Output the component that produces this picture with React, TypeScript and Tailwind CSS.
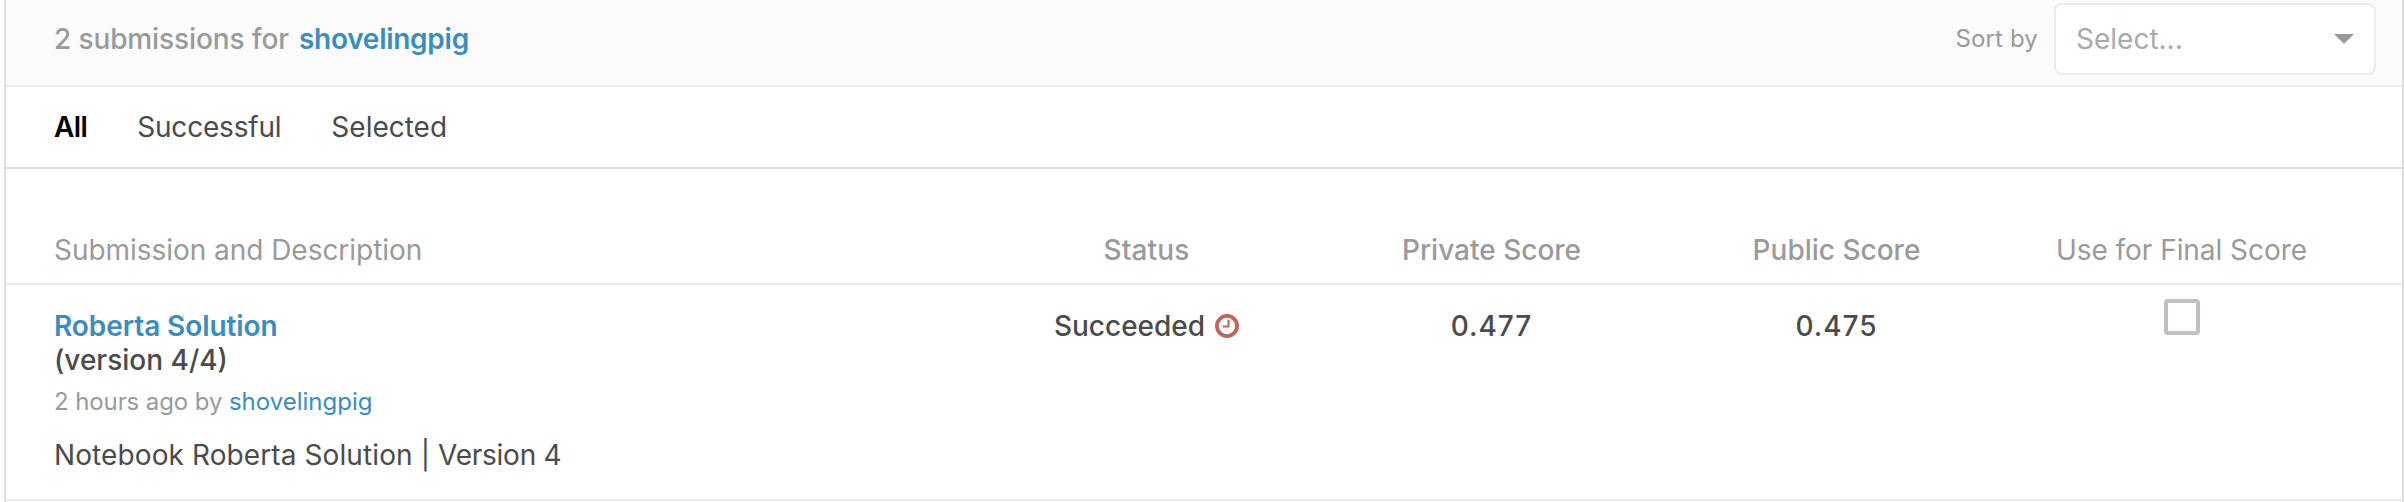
const link = "text-[#3b8dbd]";

function LateClock() {
  return (
    <svg width="24" height="24" viewBox="0 0 24 24" fill="none" stroke="#c1665f" className="shrink-0">
      <circle cx="12" cy="12" r="10.1" strokeWidth="3.9" />
      <path d="M13.5 5.8v6.7H7.7" strokeWidth="2.1" />
    </svg>
  );
}

export default function App() {
  return (
    <div className="flex h-[502px] w-[2404px] bg-white pl-1 font-['Inter',sans-serif] text-[28px] leading-[34px] text-[#4b4b4b]">
      <div className="flex w-[2400px] flex-col border-x-2 border-[#dedede]">
        <header className="flex h-[87px] shrink-0 items-start justify-between border-b-2 border-[#ebebeb] bg-[#fbfbfb] pr-[26px] pl-12">
          <h1 className="flex gap-2.5 pt-[22px] font-medium text-[#9a9a9a]">
            <span className="tracking-[-0.12px]">2 submissions for</span>
            <a className={`${link} font-semibold tracking-[-0.27px]`}>shovelingpig</a>
          </h1>
          <div className="flex pt-[3px]">
            <span className="pt-[19px] pr-4 text-[24px] tracking-[0.15px] text-[#9a9a9a]">Sort by</span>
            <div className="flex h-[72px] w-[322px] items-center justify-between rounded-lg border-2 border-[#ebebeb] bg-white pr-5 pl-5 text-[#aaaaaa]">
              <span>Select...</span>
              <svg width="20" height="10" viewBox="0 0 20 10" className="text-[#999999]">
                <path d="M0 0h20L10 10z" fill="currentColor" />
              </svg>
            </div>
          </div>
        </header>

        <nav className="flex h-[82px] shrink-0 gap-[50px] border-b-2 border-[#dedede] pt-[23px] pl-12">
          <span className="font-semibold tracking-[-0.6px] text-black">All</span>
          <span className="tracking-[-0.2px]">Successful</span>
          <span>Selected</span>
        </nav>

        <div className="grid h-[116px] shrink-0 grid-cols-[1fr_345px_345px_345px_345px] border-b-2 border-[#ebebeb] pt-[64px] pr-12 pl-12 text-center text-[#9a9a9a]">
          <span className="text-left tracking-[-0.04px]">Submission and Description</span>
          <span className="font-medium tracking-[0.15px]">Status</span>
          <span className="font-medium">Private Score</span>
          <span className="font-medium">Public Score</span>
          <span className="tracking-[-0.05px]">Use for Final Score</span>
        </div>

        <div className="grid h-[216px] shrink-0 grid-cols-[1fr_345px_345px_345px_345px] border-b-2 border-[#ebebeb] pr-12 pl-12 text-center">
          <div className="flex flex-col pt-[24px] text-left">
            <a className={`${link} font-semibold tracking-[-0.08px]`}>Roberta Solution</a>
            <span className="font-medium">(version 4/4)</span>
            <span className="pt-[8px] text-[24px] tracking-[-0.1px] text-[#9a9a9a]">
              2 hours ago by <a className={`${link} tracking-normal`}>shovelingpig</a>
            </span>
            <span className="pt-[19px] tracking-[0.1px]">
              Notebook Roberta Solution | <span className="tracking-[-0.25px]">Version 4</span>
            </span>
          </div>
          <div className="flex items-start justify-center gap-2.5 pt-[24px] font-medium">
            <span>Succeeded</span>
            <span className="pt-[5px]">
              <LateClock />
            </span>
          </div>
          <span className="pt-[24px] font-medium tracking-[1px]">0.477</span>
          <span className="pt-[24px] font-medium tracking-[1px]">0.475</span>
          <div className="flex justify-center pt-[14px]">
            <span className="size-9 rounded border-4 border-[#bdc1c6]" />
          </div>
        </div>
      </div>
    </div>
  );
}
